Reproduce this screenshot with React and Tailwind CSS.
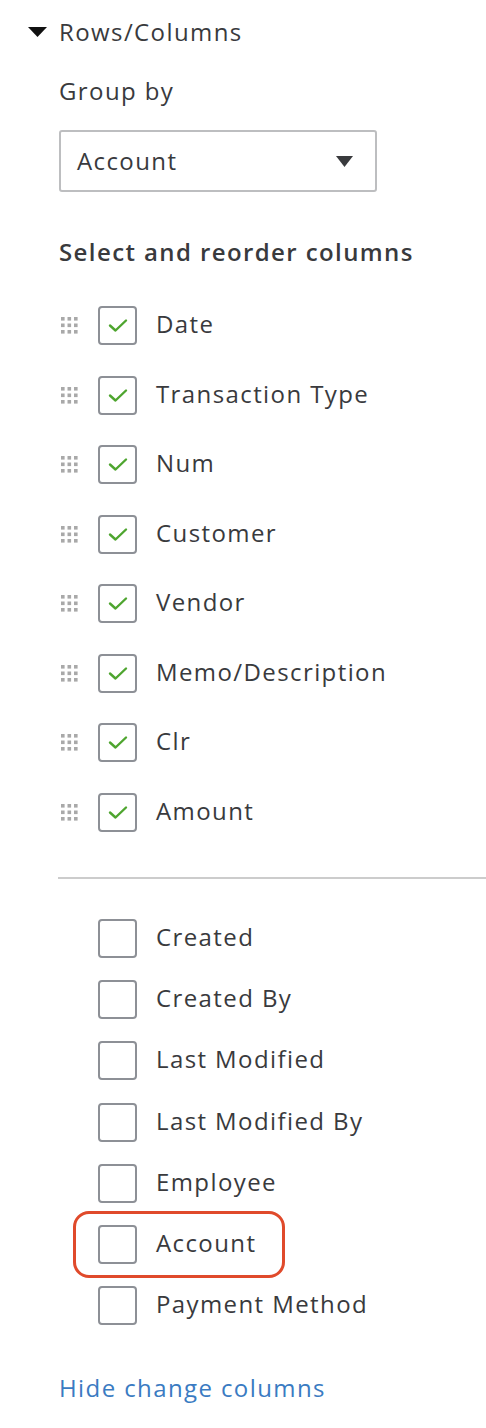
import React from "react";

const checked = ["Date", "Transaction Type", "Num", "Customer", "Vendor", "Memo/Description", "Clr", "Amount"];
const unchecked = ["Created", "Created By", "Last Modified", "Last Modified By", "Employee", "Account", "Payment Method"];

function Grip() {
  return (
    <svg width="20" height="19" viewBox="0 0 20 19" className="shrink-0">
      {[0, 1, 2].map((r) =>
        [0, 1, 2].map((c) => (
          <rect key={`${r}-${c}`} x={1 + c * 6.5} y={1 + r * 6.5} width="3.6" height="3.6" fill="#a9a9a9" />
        ))
      )}
    </svg>
  );
}

function Box({ on }) {
  return (
    <div className="w-[39px] h-[39px] shrink-0 border-2 border-[#8d9096] rounded-[4px] bg-white flex items-center justify-center">
      {on && (
        <svg width="20" height="15" viewBox="0 0 20 15">
          <path d="M2 7.5 L7.5 12.5 L18 2.5" fill="none" stroke="#4ea52f" strokeWidth="2.4" strokeLinecap="round" strokeLinejoin="round" />
        </svg>
      )}
    </div>
  );
}

export default function App() {
  return (
    <div className="w-[486px] h-[1428px] bg-white text-[#393a3d] overflow-hidden tracking-[1.4px]" style={{ fontFamily: "'Open Sans', 'Noto Sans', sans-serif" }}>
      <div className="h-[64px] flex items-center pl-[28px]">
        <svg width="19" height="10" viewBox="0 0 19 10" className="mr-[12px]">
          <path d="M0 0 L19 0 L9.5 10 Z" fill="#111" />
        </svg>
        <span className="text-[24px] leading-none">Rows/Columns</span>
      </div>
      <div className="pl-[59px]">
        <div className="h-[54px] flex items-center text-[24px] leading-none">Group by</div>
        <div className="mt-[12px] w-[318px] h-[62px] border-2 border-[#bdbec0] rounded-[3px] flex items-center justify-between pl-[16px] pr-[22px]">
          <span className="text-[24px] leading-none">Account</span>
          <svg width="17" height="11" viewBox="0 0 17 11">
            <path d="M0 0 L17 0 L8.5 11 Z" fill="#393a3d" />
          </svg>
        </div>
        <div className="mt-[30px] h-[60px] flex items-center text-[24px] font-semibold leading-none">Select and reorder columns</div>
        <div className="mt-[9px] flex flex-col">
          {checked.map((t) => (
            <div key={t} className="h-[69.5px] flex items-center">
              <div className="ml-[1px]"><Grip /></div>
              <div className="ml-[18px]"><Box on /></div>
              <span className="ml-[19px] text-[24px] leading-none -mt-[3px]">{t}</span>
            </div>
          ))}
        </div>
      </div>
      <div className="ml-[58px] mt-[30px] h-[2px] bg-[#cccccc]" />
      <div className="pl-[98px] mt-[29px] flex flex-col">
        {unchecked.map((t) => (
          <div key={t} className="relative h-[61.2px] flex items-center">
            {t === "Account" && (
              <div className="absolute left-[-25px] top-[-3px] w-[212px] h-[67px] border-[3px] border-[#e04a2b] rounded-[16px]" />
            )}
            <Box />
            <span className="ml-[19px] text-[24px] leading-none -mt-[3px]">{t}</span>
          </div>
        ))}
      </div>
      <div className="pl-[59px] mt-[24px] h-[56px] flex items-center text-[24px] leading-none text-[#3a7bc2]">Hide change columns</div>
    </div>
  );
}
